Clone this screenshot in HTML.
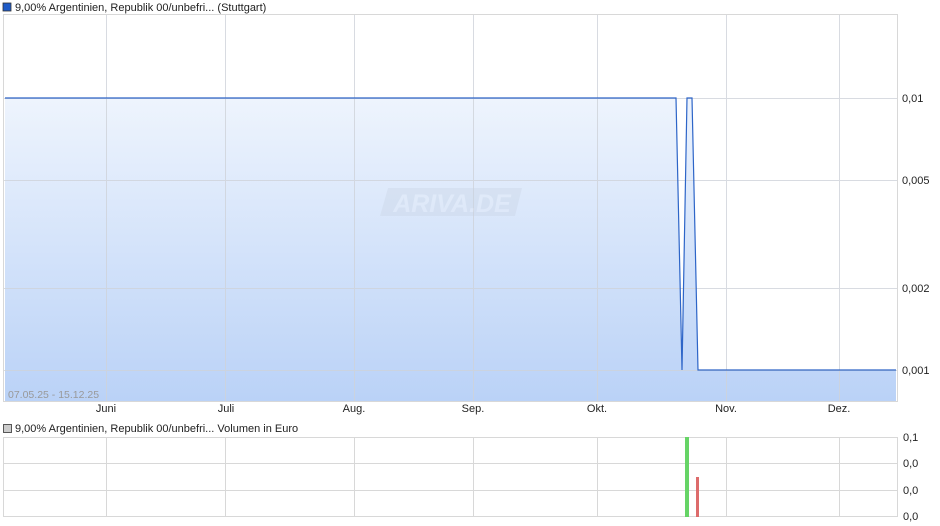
<!DOCTYPE html>
<html><head><meta charset="utf-8"><style>
html,body{margin:0;padding:0;background:#fff;}
svg{display:block;font-family:"Liberation Sans",sans-serif;}
</style></head><body>
<svg width="940" height="526" viewBox="0 0 940 526" xmlns="http://www.w3.org/2000/svg">
<defs>
<linearGradient id="g" x1="0" y1="0" x2="0" y2="1">
<stop offset="0" stop-color="#eef4fd"/><stop offset="1" stop-color="#bad2f7"/>
</linearGradient>
</defs>
<rect x="3" y="3" width="8" height="8" fill="#1f5bc7" stroke="#333" stroke-width="0.8"/>
<text x="15" y="11" font-size="11" fill="#222">9,00% Argentinien, Republik 00/unbefri... (Stuttgart)</text>
<!-- main chart -->
<path d="M5 98 L676 98 L682 370 L687 98 L692 98 L698 370 L896 370 L896 401 L5 401 Z" fill="url(#g)"/>
<g stroke="#cfd3da" stroke-width="1" opacity="0.8">
<line x1="4" y1="98.5" x2="897" y2="98.5"/><line x1="4" y1="180.5" x2="897" y2="180.5"/>
<line x1="4" y1="288.5" x2="897" y2="288.5"/><line x1="4" y1="370.5" x2="897" y2="370.5"/>
<line x1="106.5" y1="14" x2="106.5" y2="401"/><line x1="225.5" y1="14" x2="225.5" y2="401"/>
<line x1="354.5" y1="14" x2="354.5" y2="401"/><line x1="473.5" y1="14" x2="473.5" y2="401"/>
<line x1="597.5" y1="14" x2="597.5" y2="401"/><line x1="726.5" y1="14" x2="726.5" y2="401"/>
<line x1="839.5" y1="14" x2="839.5" y2="401"/>
</g>
<rect x="3.5" y="14.5" width="894" height="387" fill="none" stroke="#d8d8d8"/>
<g opacity="0.35">
<path d="M388 188 L522 188 L515 216 L380 216 Z" fill="#c8d3e4"/>
<text x="452" y="212" font-size="25" font-style="italic" font-weight="bold" fill="#e6ecf6" text-anchor="middle">ARIVA.DE</text>
</g>
<path d="M5 98 L676 98 L682 370 L687 98 L692 98 L698 370 L896 370" fill="none" stroke="#2d65c8" stroke-width="1.2"/>
<text x="8" y="398" font-size="10.5" fill="#999">07.05.25 - 15.12.25</text>
<g font-size="11" fill="#222">
<text x="902" y="102">0,01</text><text x="902" y="184">0,005</text>
<text x="902" y="292">0,002</text><text x="902" y="374">0,001</text>
</g>
<g font-size="11" fill="#222" text-anchor="middle">
<text x="106" y="412">Juni</text><text x="226" y="412">Juli</text><text x="354" y="412">Aug.</text>
<text x="473" y="412">Sep.</text><text x="597" y="412">Okt.</text><text x="726" y="412">Nov.</text>
<text x="839" y="412">Dez.</text>
</g>
<!-- volume -->
<rect x="3.5" y="424.5" width="8" height="8" fill="#ccc" stroke="#333" stroke-width="0.8"/>
<text x="15" y="432" font-size="11" fill="#222">9,00% Argentinien, Republik 00/unbefri... Volumen in Euro</text>
<g stroke="#d8d8d8" stroke-width="1">
<line x1="4" y1="437.5" x2="897" y2="437.5"/><line x1="4" y1="463.5" x2="897" y2="463.5"/>
<line x1="4" y1="490.5" x2="897" y2="490.5"/><line x1="4" y1="516.5" x2="897" y2="516.5"/>
<line x1="3.5" y1="437" x2="3.5" y2="517"/><line x1="897.5" y1="437" x2="897.5" y2="517"/>
<line x1="106.5" y1="437" x2="106.5" y2="517"/><line x1="225.5" y1="437" x2="225.5" y2="517"/>
<line x1="354.5" y1="437" x2="354.5" y2="517"/><line x1="473.5" y1="437" x2="473.5" y2="517"/>
<line x1="597.5" y1="437" x2="597.5" y2="517"/><line x1="726.5" y1="437" x2="726.5" y2="517"/>
<line x1="839.5" y1="437" x2="839.5" y2="517"/>
</g>
<rect x="685" y="437" width="4" height="80" fill="#66d466"/>
<rect x="696" y="477" width="3" height="40" fill="#dd6b6b"/>
<g font-size="11" fill="#222">
<text x="903" y="441">0,1</text><text x="903" y="467">0,0</text>
<text x="903" y="494">0,0</text><text x="903" y="520">0,0</text>
</g>
</svg>
</body></html>
